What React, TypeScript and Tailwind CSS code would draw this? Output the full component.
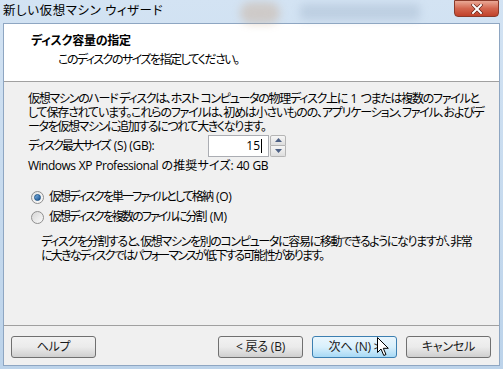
import React from "react";

const font = { fontFamily: '"Open Sans", "Noto Sans CJK JP", sans-serif' };

function Btn({ label, primary }: { label: string; primary?: boolean }) {
  return (
    <div
      className={
        "w-[85px] h-[22px] rounded-[3px] border flex items-center justify-center text-[12px] text-[#1a1a1a] tracking-[-0.2px] " +
        (primary
          ? "border-[#3c7fb1] bg-gradient-to-b from-[#eaf6fd] via-[#d9f0fc] to-[#a7d9f5]"
          : "border-[#707070] bg-gradient-to-b from-[#f2f2f2] via-[#ebebeb] to-[#cfcfcf]")
      }
    >
      {label}
    </div>
  );
}

const J = "whitespace-nowrap leading-[14px] [text-align-last:justify] ";
const L = "tracking-[-0.3px] ml-[4px]";

export default function App() {
  return (
    <div
      className="w-[503px] h-[369px] bg-gradient-to-b from-[#d3e3f3] to-[#bcd3ea] flex flex-col relative overflow-hidden [font-feature-settings:'palt']"
      style={font}
    >
      {/* title bar */}
      <div className="h-[23px] flex items-start relative">
        <div className="absolute left-[240px] top-[2px] w-[40px] h-[22px] rounded-full bg-[#c9a78a] opacity-40 blur-[4px]" />
        <div className="absolute left-[300px] top-[4px] w-[120px] h-[16px] rounded bg-[#9fb3c9] opacity-40 blur-[4px]" />
        <span className={J + "ml-[3px] mt-[3px] w-[159px] text-[12.5px] leading-[16px] text-black relative tracking-[-0.5px]"}>
          新しい仮想マシン ウィザード
        </span>
        <div className="absolute right-[4px] top-0 w-[45px] h-[17px] rounded-b-[4px] border border-[#8a3a2a] bg-gradient-to-b from-[#e9a896] via-[#d3664f] to-[#c1412a] flex items-center justify-center">
          <svg width="12" height="10" viewBox="0 0 12 10">
            <path d="M2 1 L10 9 M10 1 L2 9" stroke="#5a1a10" strokeWidth="3.2" strokeLinecap="square" />
            <path d="M2 1 L10 9 M10 1 L2 9" stroke="#ffffff" strokeWidth="2" strokeLinecap="square" />
          </svg>
        </div>
      </div>

      {/* client */}
      <div className="mx-[3px] mb-[3px] flex-1 flex flex-col bg-[#f0f0f0] border border-[#8ea6c2]">
        {/* header */}
        <div className="h-[58px] bg-white border-b border-[#a0a0a0] pt-[8px] pl-[27px]">
          <div className={J + "w-[99px] text-[12px] leading-[18px] font-bold text-black tracking-[-1px]"}>ディスク容量の指定</div>
          <div className={J + "w-[180px] text-[12px] leading-[18px] text-black ml-[27px] mt-[1px] tracking-[-2px]"}>
            このディスクのサイズを指定してください。
          </div>
        </div>

        {/* body */}
        <div className="flex-1 pl-[24px] pr-[4px] pt-[10px] text-[12px] text-black">
          <div className={J + "w-[450px] tracking-[-2px]"}>
            仮想マシンのハード ディスクは、ホスト コンピュータの物理ディスク上に<span className="tracking-[-0.3px]"> 1 </span>つまたは複数のファイルと
          </div>
          <div className={J + "w-[455px] tracking-[-1.8px]"}>
            して保存されています。これらのファイルは、初めは小さいものの、アプリケーション、ファイル、およびデ
          </div>
          <div className={J + "w-[237px] tracking-[-1.8px]"}>
            ータを仮想マシンに追加するにつれて大きくなります。
          </div>

          <div className="flex items-center mt-[0px] h-[23px]">
            <div className="w-[180px]">
              <div className="whitespace-nowrap leading-[14px]">
                <span className="tracking-[-1.8px]">ディスク最大サイズ</span>
                <span className={L}>(S) (GB):</span>
              </div>
            </div>
            <div className="w-[61px] h-[22px] border border-[#abadb3] bg-white flex items-center justify-end pr-[6px]">
              <span className="leading-[14px]">15</span>
              <span className="w-[1px] h-[14px] bg-black ml-[1px]" />
            </div>
            <div className="w-[16px] h-[22px] flex flex-col ml-[1px]">
              <div className="flex-1 border border-[#b5b5b5] rounded-t-[2px] bg-gradient-to-b from-[#f6f6f6] to-[#dedede] flex items-center justify-center">
                <svg width="7" height="4" viewBox="0 0 7 4"><path d="M0 4 L3.5 0 L7 4Z" fill="#4d6185" /></svg>
              </div>
              <div className="flex-1 border border-t-0 border-[#b5b5b5] rounded-b-[2px] bg-gradient-to-b from-[#f6f6f6] to-[#dedede] flex items-center justify-center">
                <svg width="7" height="4" viewBox="0 0 7 4"><path d="M0 0 L3.5 4 L7 0Z" fill="#4d6185" /></svg>
              </div>
            </div>
          </div>

          <div className={J + "w-[240px] mt-[2px] tracking-[-0.5px]"}>Windows XP Professional の推奨サイズ: 40 GB</div>

          <div className="mt-[17px] flex items-center h-[14px] pl-[3px]">
            <div className="w-[13px] h-[13px] rounded-full border border-[#8f8f8f] bg-gradient-to-br from-[#e6e6e6] to-[#fafafa] flex items-center justify-center">
              <div className="w-[7px] h-[7px] rounded-full bg-gradient-to-br from-[#7fb6e6] to-[#17518f] border border-[#1d5589]" />
            </div>
            <span className="ml-[5px] whitespace-nowrap leading-[14px]">
              <span className="tracking-[-1.9px]">仮想ディスクを単一ファイルとして格納</span>
              <span className={L}>(O)</span>
            </span>
          </div>
          <div className="mt-[6px] flex items-center h-[14px] pl-[3px]">
            <div className="w-[13px] h-[13px] rounded-full border border-[#8f8f8f] bg-gradient-to-br from-[#d6d6d6] to-[#fafafa]" />
            <span className="ml-[5px] whitespace-nowrap leading-[14px]">
              <span className="tracking-[-1.9px]">仮想ディスクを複数のファイルに分割</span>
              <span className={L}>(M)</span>
            </span>
          </div>

          <div className="mt-[11px] pl-[13px]">
            <div className={J + "w-[430px] tracking-[-1.8px]"}>
              ディスクを分割すると、仮想マシンを別のコンピュータに容易に移動できるようになりますが、非常
            </div>
            <div className={J + "w-[274px] tracking-[-1.8px]"}>
              に大きなディスクではパフォーマンスが低下する可能性があります。
            </div>
          </div>
        </div>

        {/* footer */}
        <div className="h-[40px] border-t border-[#a0a0a0] flex items-start pt-[10px] pl-[7px] pr-[8px]">
          <Btn label="ヘルプ" />
          <div className="flex-1" />
          <div className="flex gap-[9px]">
            <Btn label="< 戻る (B)" />
            <div className="relative">
              <Btn label="次へ (N) >" primary />
              <svg className="absolute left-[65px] top-[1px]" width="13" height="20" viewBox="0 0 13 20">
                <path d="M0.5 0.5 L0.5 15.5 L4 12 L6.8 18.5 L9 17.5 L6.3 11.3 L11.3 11.3 Z" fill="#ffffff" stroke="#000" strokeWidth="1" strokeLinejoin="round" />
              </svg>
            </div>
            <Btn label="キャンセル" />
          </div>
        </div>
      </div>
    </div>
  );
}
